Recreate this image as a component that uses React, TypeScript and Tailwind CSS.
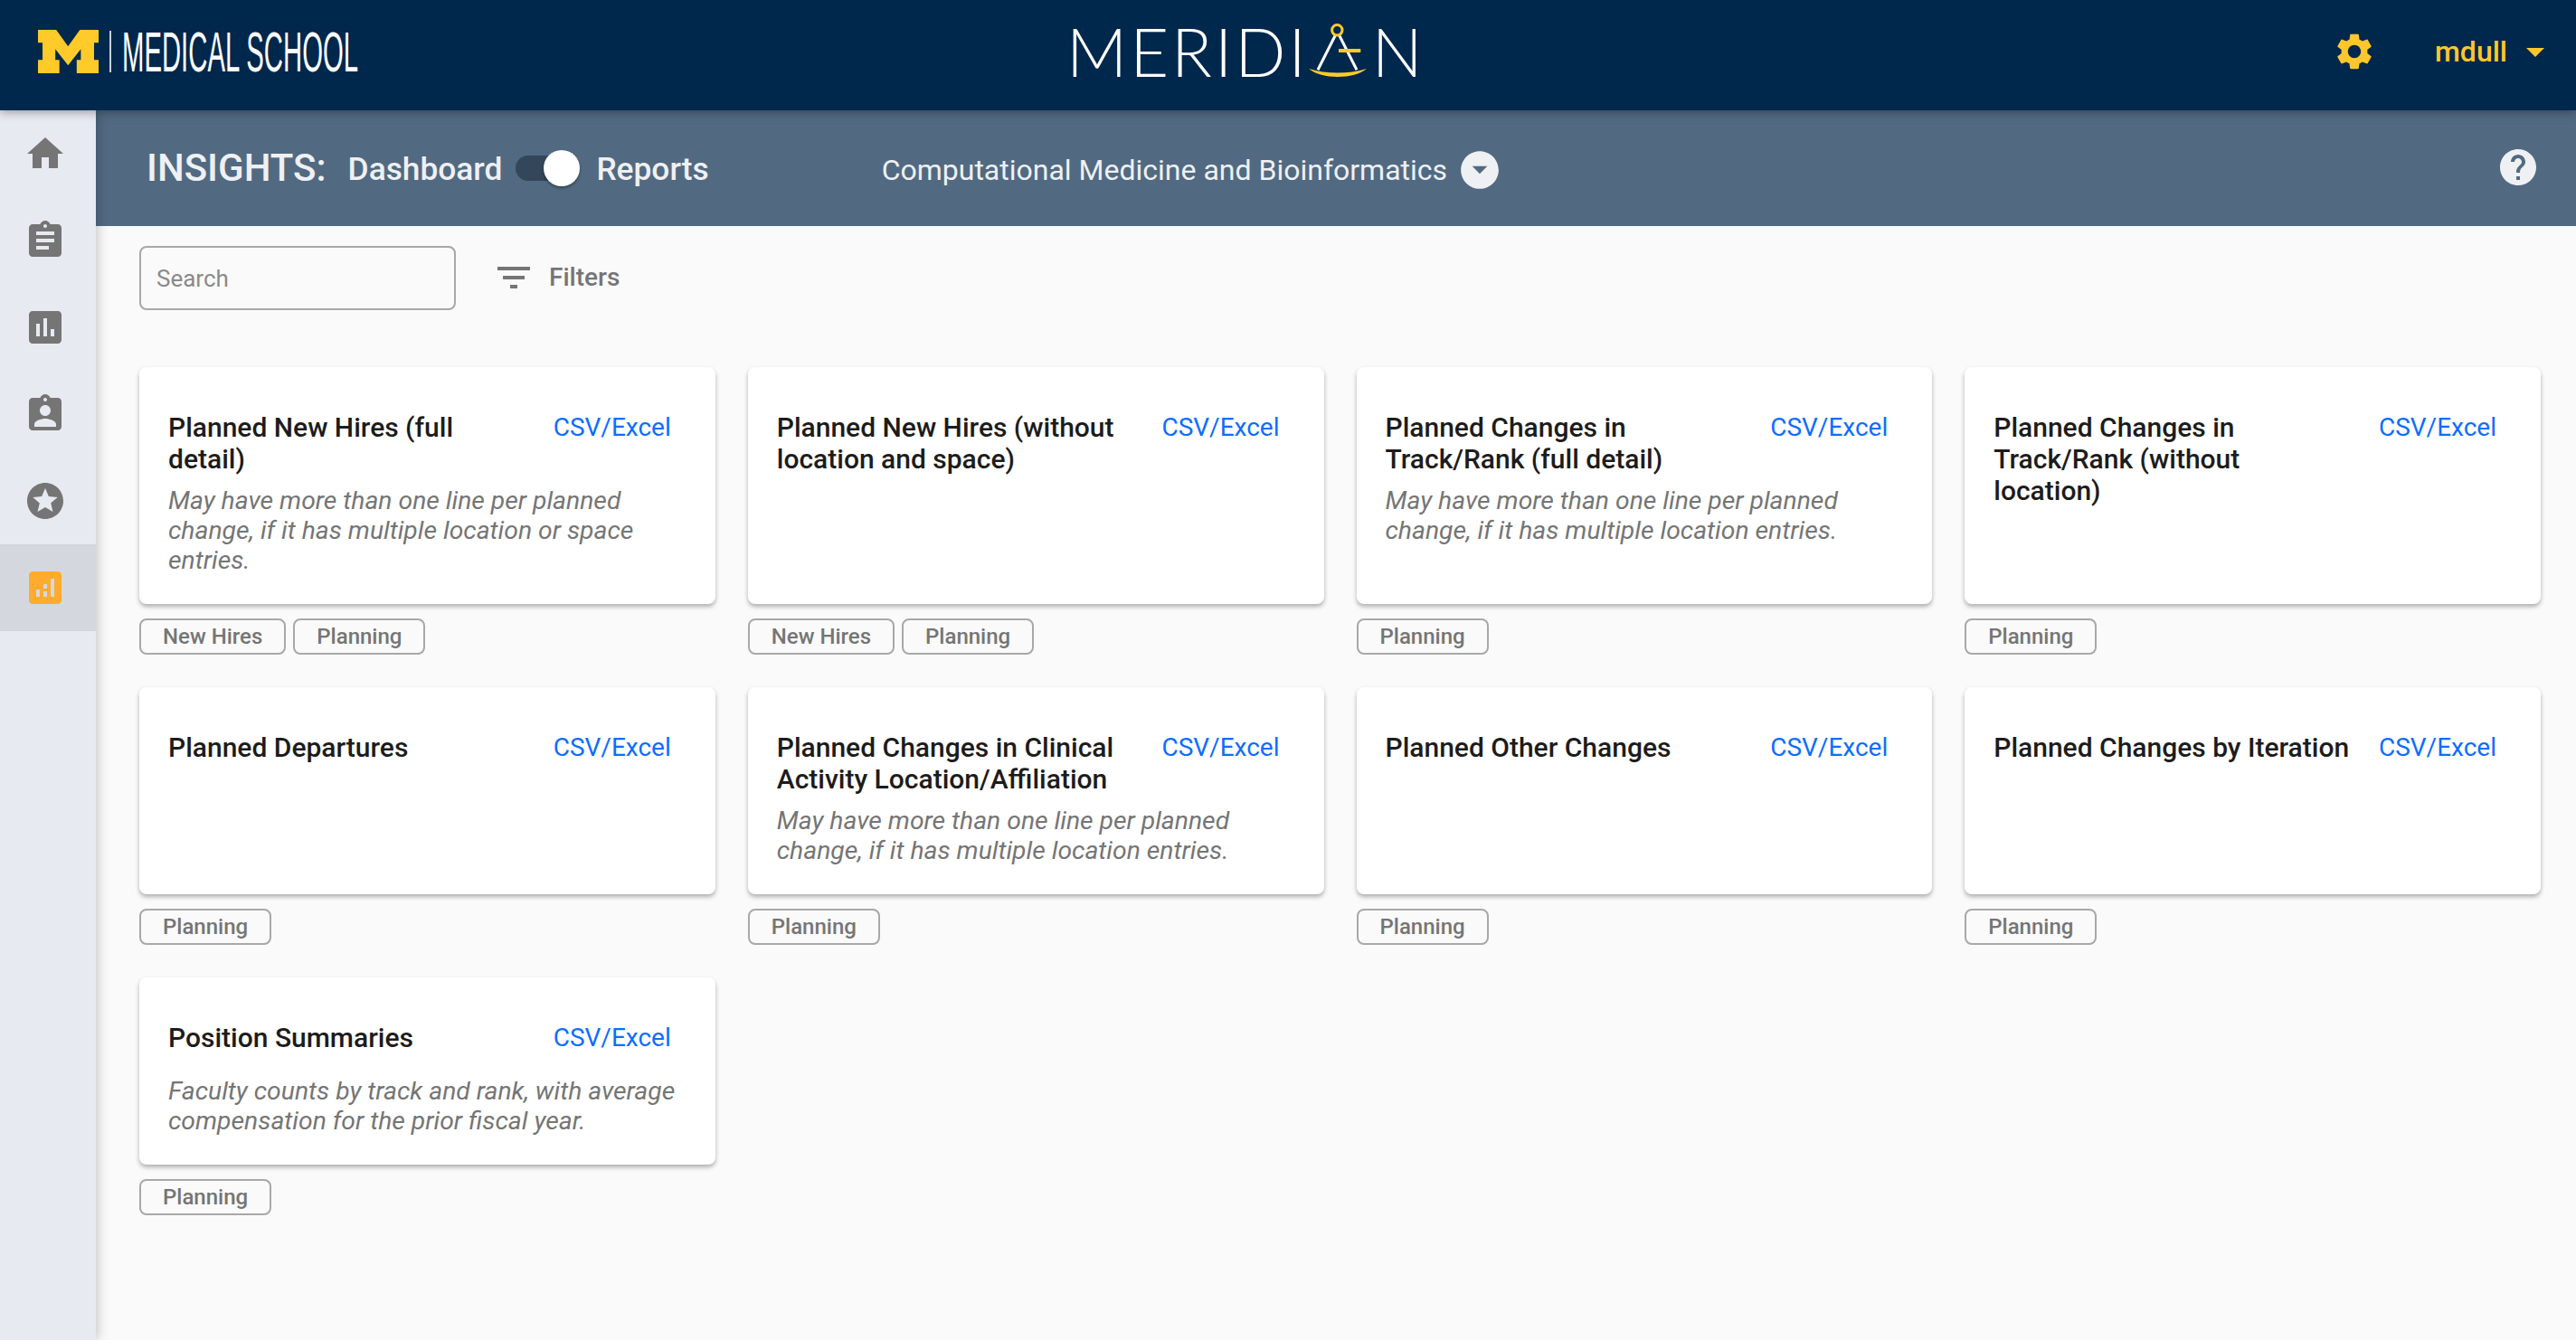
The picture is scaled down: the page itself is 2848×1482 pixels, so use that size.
import React from 'react';

const paths: Record<string, string> = {
    home: 'M10 20v-6h4v6h5v-8h3L12 3 2 12h3v8z',
    assignment: 'M19 3h-4.18C14.4 1.84 13.3 1 12 1c-1.3 0-2.4.84-2.82 2H5c-1.1 0-2 .9-2 2v14c0 1.1.9 2 2 2h14c1.1 0 2-.9 2-2V5c0-1.1-.9-2-2-2zm-7 0c.55 0 1 .45 1 1s-.45 1-1 1-1-.45-1-1 .45-1 1-1zm2 14H7v-2h7v2zm3-4H7v-2h10v2zm0-4H7V7h10v2z',
    assessment: 'M19 3H5c-1.1 0-2 .9-2 2v14c0 1.1.9 2 2 2h14c1.1 0 2-.9 2-2V5c0-1.1-.9-2-2-2zM9 17H7v-7h2v7zm4 0h-2V7h2v10zm4 0h-2v-4h2v4z',
    assignmentInd: 'M19 3h-4.18C14.4 1.84 13.3 1 12 1c-1.3 0-2.4.84-2.82 2H5c-1.1 0-2 .9-2 2v14c0 1.1.9 2 2 2h14c1.1 0 2-.9 2-2V5c0-1.1-.9-2-2-2zm-7 0c.55 0 1 .45 1 1s-.45 1-1 1-1-.45-1-1 .45-1 1-1zm0 4c1.66 0 3 1.34 3 3s-1.34 3-3 3-3-1.34-3-3 1.34-3 3-3zm6 12H6v-1.4c0-2 4-3.1 6-3.1s6 1.1 6 3.1V19z',
    stars: 'M11.99 2C6.47 2 2 6.48 2 12s4.47 10 9.99 10C17.52 22 22 17.52 22 12S17.52 2 11.99 2zm4.24 16L12 15.45 7.77 18l1.12-4.81-3.73-3.23 4.92-.42L12 5l1.92 4.53 4.92.42-3.73 3.23L16.23 18z',
    insights: 'M19 3H5c-1.1 0-2 .9-2 2v14c0 1.1.9 2 2 2h14c1.1 0 2-.9 2-2V5c0-1.1-.9-2-2-2zM9 17H7v-4h2v4zm4 0h-2v-3h2v3zm0-4.5h-2V10h2v2.500zm4 4.500h-2V7h2v10z',
    settings: 'M19.14 12.94c.04-.3.06-.61.06-.94 0-.32-.02-.64-.07-.94l2.03-1.58c.18-.14.23-.41.12-.61l-1.92-3.32c-.12-.22-.37-.29-.59-.22l-2.39.96c-.5-.38-1.03-.7-1.62-.94l-.36-2.54c-.04-.24-.24-.41-.48-.41h-3.84c-.24 0-.43.17-.47.41l-.36 2.54c-.59.24-1.13.57-1.62.94l-2.39-.96c-.22-.08-.47 0-.59.22L2.74 8.87c-.12.21-.08.47.12.61l2.03 1.58c-.05.3-.09.63-.09.94s.02.64.07.94l-2.03 1.58c-.18.14-.23.41-.12.61l1.92 3.32c.12.22.37.29.59.22l2.39-.96c.5.38 1.03.7 1.62.94l.36 2.54c.05.24.24.41.48.41h3.84c.24 0 .44-.17.47-.41l.36-2.54c.59-.24 1.13-.56 1.62-.94l2.39.96c.22.08.47 0 .59-.22l1.92-3.32c.12-.22.07-.47-.12-.61l-2.01-1.58zM12 15.6c-1.98 0-3.6-1.62-3.6-3.6s1.62-3.6 3.6-3.6 3.6 1.62 3.6 3.6-1.62 3.6-3.6 3.6z',
    help: 'M12 2C6.48 2 2 6.48 2 12s4.48 10 10 10 10-4.48 10-10S17.52 2 12 2zm1 17h-2v-2h2v2zm2.07-7.75l-.9.92C13.45 12.9 13 13.5 13 15h-2v-.5c0-1.1.45-2.1 1.17-2.83l1.24-1.26c.37-.36.59-.86.59-1.41 0-1.1-.9-2-2-2s-2 .9-2 2H8c0-2.21 1.79-4 4-4s4 1.79 4 4c0 .88-.36 1.68-.93 2.25z',
    filter: 'M10 18h4v-2h-4v2zM3 6v2h18V6H3zm3 7h12v-2H6v2z',
    caret: 'M7 10l5 5 5-5z',
    caretCircle: 'M12 2C6.48 2 2 6.48 2 12s4.48 10 10 10 10-4.48 10-10S17.52 2 12 2zm0 12l-4-4h8l-4 4z',
};

const Icon: React.FC<{ name: string; className?: string }> = ({ name, className }) => (
    <svg viewBox="0 0 24 24" fill="currentColor" className={className}>
        <path d={paths[name]} />
    </svg>
);

interface Report {
    title: string;
    description?: string;
    tags: string[];
}

const multiLocation = 'May have more than one line per planned change, if it has multiple location entries.';

const rows: Report[][] = [
    [
        {
            title: 'Planned New Hires (full detail)',
            description: 'May have more than one line per planned change, if it has multiple location or space entries.',
            tags: ['New Hires', 'Planning'],
        },
        { title: 'Planned New Hires (without location and space)', tags: ['New Hires', 'Planning'] },
        { title: 'Planned Changes in Track/Rank (full detail)', description: multiLocation, tags: ['Planning'] },
        { title: 'Planned Changes in Track/Rank (without location)', tags: ['Planning'] },
    ],
    [
        { title: 'Planned Departures', tags: ['Planning'] },
        { title: 'Planned Changes in Clinical Activity Location/Affiliation', description: multiLocation, tags: ['Planning'] },
        { title: 'Planned Other Changes', tags: ['Planning'] },
        { title: 'Planned Changes by Iteration', tags: ['Planning'] },
    ],
    [
        {
            title: 'Position Summaries',
            description: 'Faculty counts by track and rank, with average compensation for the prior fiscal year.',
            tags: ['Planning'],
        },
    ],
];

const navItems = ['home', 'assignment', 'assessment', 'assignmentInd', 'stars', 'insights'];

const ReportCard: React.FC<{ report: Report }> = ({ report }) => (
    <div className="flex flex-col">
        <div className="flex-1 rounded-[8px] bg-white pt-[49px] pb-[32px] pl-[32px] pr-[32px] shadow-[0_3px_5px_rgba(0,0,0,0.3)]">
            <div className="mb-[12px] flex min-h-[48px] items-start justify-between pr-[17px]">
                <h3 className="w-[396px] text-[30px] leading-[35px] font-medium text-[#1c1c1c]">{report.title}</h3>
                <a className="text-[28px] leading-[35px] text-[#0d6efd]">CSV/Excel</a>
            </div>
            {report.description && (
                <p className="text-[28.3px] leading-[33px] text-[#757575] italic">{report.description}</p>
            )}
        </div>
        <div className="mt-[16px] flex gap-[8px]">
            {report.tags.map((tag) => (
                <span
                    key={tag}
                    className="flex h-[40px] items-center rounded-[8px] border-2 border-[#a8a8a8] px-[24px] text-[24px] font-medium text-[#757575]"
                >
                    {tag}
                </span>
            ))}
        </div>
    </div>
);

const Header: React.FC = () => (
    <header className="relative z-20 flex h-[122px] shrink-0 items-center bg-[#00274c] pl-[42px] pr-[21px] pb-[8px] shadow-[0_2px_10px_rgba(0,0,0,0.35)]">
        <svg viewBox="0 0 66.500 47.500" className="h-[48px] w-[67px]" fill="#ffcb2b">
            <path d="M0 0h20l13 18L46 0h20.500v14h-5v19h5v14.500h-24V33H47V21L33 39 19 21v12h4.500v14.500H0V33h5V14H0z" />
        </svg>
        <div className="ml-[12px] h-[46px] w-[2px] bg-[#c8d0d8]" />
        <span className="ml-[12px] w-[262px] origin-left scale-x-[0.465] font-['Liberation_Sans_Narrow','Liberation_Sans',sans-serif] text-[63px] leading-none whitespace-nowrap text-white">
            MEDICAL SCHOOL
        </span>
        <div className="ml-[782px] flex items-center font-['Lato',sans-serif] text-[74px] leading-none font-light tracking-[3px] text-white">
            <span>MERIDI</span>
            <svg viewBox="0 0 64 60" className="mb-[2px] h-[60px] w-[64px]" fill="none">
                <path d="M29.700 12.300 10 51.300M33.300 12.300 53 51.300" stroke="#fff" strokeWidth="3" />
                <circle cx="31.300" cy="7.300" r="5.700" stroke="#ffcb2b" strokeWidth="3" />
                <path d="M33 30h24.300" stroke="#ffcb2b" strokeWidth="4" />
                <path d="M0 50c20 6 44 6 64 0-14 12-50 12-64 0z" fill="#ffcb2b" />
            </svg>
            <span className="ml-[6px]">N</span>
        </div>
        <div className="ml-auto flex items-center text-[#ffc72c]">
            <Icon name="settings" className="mr-[65px] h-[48px] w-[48px]" />
            <span className="text-[32px] font-medium">mdull</span>
            <Icon name="caret" className="ml-[7px] h-[48px] w-[48px]" />
        </div>
    </header>
);

const SubHeader: React.FC = () => (
    <div className="flex h-[128px] shrink-0 items-center bg-[#516a82] pl-[56px] pr-[40px] text-[#eff0f3]">
        <span className="mb-[2px] text-[42px] font-medium">INSIGHTS:</span>
        <span className="mt-[2px] ml-[24px] text-[35.300px] font-medium">Dashboard</span>
        <div className="relative ml-[15px] h-[28px] w-[54px] rounded-full bg-[#34465a]">
            <div className="absolute top-[-6px] right-[-17px] h-[40px] w-[40px] rounded-full bg-white shadow-[0_2px_3px_rgba(0,0,0,0.35)]" />
        </div>
        <span className="mt-[2px] ml-[35px] text-[35.300px] font-medium">Reports</span>
        <span className="mt-[4px] ml-[191px] text-[32px]">Computational Medicine and Bioinformatics</span>
        <Icon name="caretCircle" className="mt-[4px] ml-[11px] h-[50px] w-[50px]" />
        <Icon name="help" className="mb-[2px] ml-auto h-[48px] w-[48px]" />
    </div>
);

export default function App() {
    return (
        <div className="flex h-screen flex-col overflow-hidden bg-[#fafafa] font-['Roboto',sans-serif]">
            <Header />
            <div className="flex min-h-0 flex-1">
                <aside className="z-10 w-[106px] shrink-0 bg-[#e7eaf0] shadow-[2px_0_12px_rgba(0,0,0,0.22)]">
                    {navItems.map((item) => (
                        <div
                            key={item}
                            className={
                                item === 'insights'
                                    ? 'flex h-[96px] items-center justify-center bg-[#d4d8de] pr-[6px] text-[#ffab2e]'
                                    : 'flex h-[96px] items-center justify-center pr-[6px] text-[#757575]'
                            }
                        >
                            <Icon name={item} className="h-[48px] w-[48px]" />
                        </div>
                    ))}
                </aside>
                <main className="flex min-w-0 flex-1 flex-col">
                    <SubHeader />
                    <div className="flex items-center pt-[22px] pl-[48px]">
                        <div className="flex h-[71px] w-[350px] items-center rounded-[8px] border-2 border-[#a8a8a8] pt-[2px] pl-[17px] text-[26px] text-[#8a8a8a]">
                            Search
                        </div>
                        <Icon name="filter" className="mb-[2px] ml-[40px] h-[48px] w-[48px] text-[#757575]" />
                        <span className="mb-[2px] ml-[15px] text-[28px] font-medium text-[#757575]">Filters</span>
                    </div>
                    <div className="mt-[63px] flex flex-col gap-[36px] pl-[48px] pr-[39px]">
                        {rows.map((row, index) => (
                            <div key={index} className="grid grid-cols-4 gap-x-[36px]">
                                {row.map((report) => (
                                    <ReportCard key={report.title} report={report} />
                                ))}
                            </div>
                        ))}
                    </div>
                </main>
            </div>
        </div>
    );
}
